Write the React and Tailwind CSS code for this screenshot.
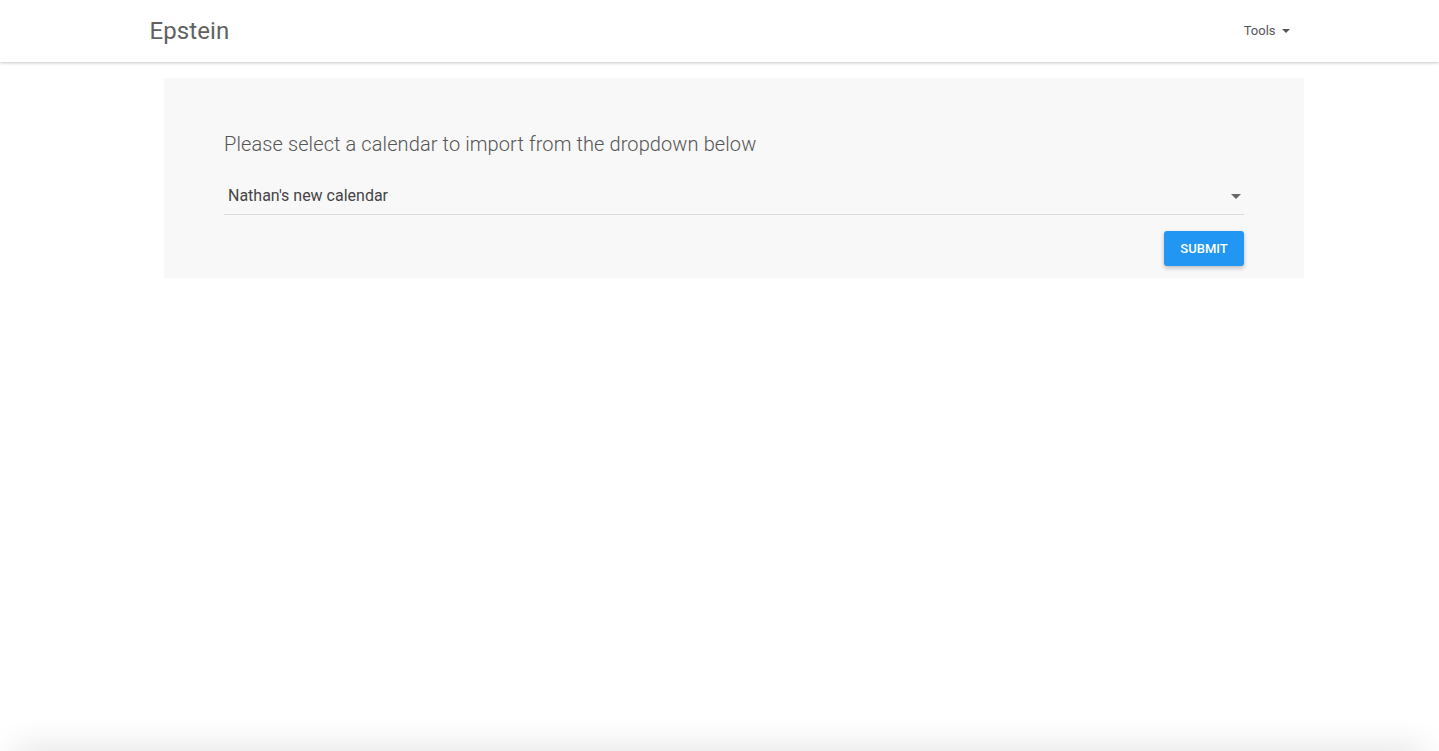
import React from 'react';

export default function App() {
    return (
        <div className="h-[751px] flex flex-col overflow-hidden bg-white font-['Roboto',sans-serif]">
            <nav className="h-[62px] shrink-0 bg-white shadow-[0_1px_3px_rgba(0,0,0,0.22)] relative z-10">
                <div className="w-[1140px] mx-auto h-full flex items-center justify-between">
                    <a href="#" className="text-[24px] text-[#616161] tracking-[0.1px]">Epstein</a>
                    <button className="flex items-center gap-[6px] text-[13px] text-[#555] pr-0">
                        Tools
                        <span className="w-0 h-0 border-l-[4px] border-r-[4px] border-t-[4px] border-l-transparent border-r-transparent border-t-[#555]" />
                    </button>
                </div>
            </nav>

            <main className="pt-4">
                <div className="w-[1140px] ml-[164px] bg-[#f8f8f8] px-[60px] pt-[52px] pb-3 h-[200px]">
                    <h2 className="text-[20px] font-light text-[#555] leading-[28px] tracking-[0.1px]">
                        Please select a calendar to import from the dropdown below
                    </h2>
                    <div className="mt-[20px] flex items-center justify-between border-b border-[#dcdcdc] h-[37px] pl-1 pr-[3px]">
                        <span className="text-[16px] text-[#444]">Nathan's new calendar</span>
                        <span className="w-0 h-0 border-l-[5px] border-r-[5px] border-t-[5px] border-l-transparent border-r-transparent border-t-[#666]" />
                    </div>
                    <div className="flex justify-end mt-4">
                        <button className="h-[35px] w-[80px] rounded-[3px] bg-[#2196f3] text-white text-[13px] font-medium uppercase shadow-[0_2px_4px_rgba(0,0,0,0.25)]">
                            Submit
                        </button>
                    </div>
                </div>
            </main>

            <div className="mt-auto mx-[12px] h-[20px] mb-[-20px] rounded-xl shadow-[0_0_34px_rgba(0,0,0,0.16)] bg-white" />
        </div>
    );
}
